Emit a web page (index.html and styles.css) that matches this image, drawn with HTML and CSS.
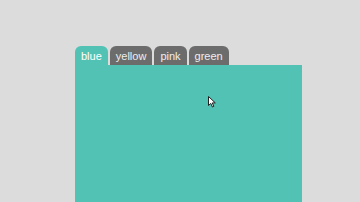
FILE: index.html
```html
<!DOCTYPE html>
<html lang="en">
<head>
    <meta charset="UTF-8">
    <meta name="viewport" content="width=device-width, initial-scale=1.0">
    <title>Tabs</title>
    <link rel="stylesheet" href="styles.css">
</head>
<body>
    <div class="wrap">
        <div class="tabs">
            <div class="tab active">blue</div>
            <div class="tab">yellow</div>
            <div class="tab">pink</div>
            <div class="tab">green</div>
        </div>
        <div class="panel">
            <svg class="cursor" width="8" height="12" viewBox="0 0 8 12">
                <path d="M0.5 0.5 L0.5 9.5 L2.8 7.4 L4.4 11 L5.8 10.4 L4.3 6.9 L7.3 6.9 Z" fill="#fff" stroke="#222" stroke-width="1"/>
            </svg>
        </div>
    </div>
</body>
</html>
```

FILE: styles.css
```css
body {
    margin: 0;
    background-color: #dcdcdc;
    font-family: "Liberation Sans", Arial, sans-serif;
    overflow: hidden;
}
.wrap {
    padding: 46px 0 0 75px;
}
.tabs {
    display: flex;
    gap: 2px;
}
.tab {
    height: 19px;
    line-height: 20px;
    padding: 0 6px;
    font-size: 11px;
    color: #eeeeee;
    background-color: #6c6c6c;
    border-radius: 6px 6px 0 0;
}
.tab.active {
    background-color: #52c2b4;
    color: #ffffff;
}
.panel {
    position: relative;
    width: 227px;
    height: 140px;
    background-color: #52c2b4;
}
.cursor {
    position: absolute;
    left: 133px;
    top: 31px;
}
```
